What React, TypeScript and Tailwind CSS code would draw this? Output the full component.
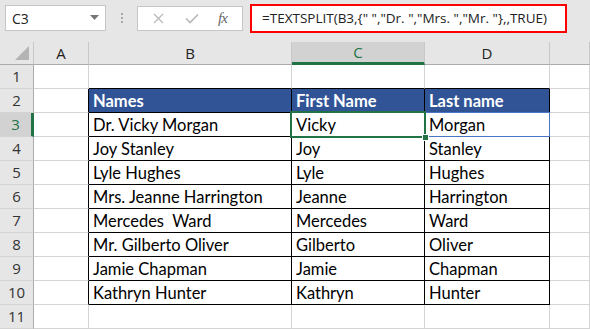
import React from "react";

const cols = ["A", "B", "C", "D", ""];
const data: string[][] = [
  ["Names", "First Name", "Last name"],
  ["Dr. Vicky Morgan", "Vicky", "Morgan"],
  ["Joy Stanley", "Joy", "Stanley"],
  ["Lyle Hughes", "Lyle", "Hughes"],
  ["Mrs. Jeanne Harrington", "Jeanne", "Harrington"],
  ["Mercedes  Ward", "Mercedes", "Ward"],
  ["Mr. Gilberto Oliver", "Gilberto", "Oliver"],
  ["Jamie Chapman", "Jamie", "Chapman"],
  ["Kathryn Hunter", "Kathryn", "Hunter"],
];

function Cell({ row, col }: { row: number; col: number }) {
  const inTable = row >= 2 && row <= 10 && col >= 1 && col <= 3;
  const rightBlack = inTable || (col === 0 && row >= 2 && row <= 10);
  const bottomBlack = inTable || (row === 1 && col >= 1 && col <= 3);
  const isHeader = row === 2 && inTable;
  const text = inTable ? data[row - 2][col - 1] : "";
  const isC3 = row === 3 && col === 2;
  const isD3 = row === 3 && col === 3;
  return (
    <div
      className={
        "relative flex items-end pl-[4px] pb-[1px] whitespace-pre border-r border-b font-['Lato',sans-serif] text-[16.5px] leading-[20px] " +
        (rightBlack ? "border-r-black " : "border-r-[#d4d4d4] ") +
        (bottomBlack ? "border-b-black " : "border-b-[#d4d4d4] ") +
        (isHeader ? "bg-[#305496] text-white font-bold " : "bg-white text-black ")
      }
    >
      {text}
      {isD3 && (
        <div className="absolute left-[-1px] top-[-1px] right-[-1px] bottom-[-1px] border border-[#4a74c4] shadow-[2px_2px_4px_rgba(0,0,0,0.12)]" />
      )}
      {isC3 && (
        <>
          <div className="absolute left-[-2px] top-[-2px] right-[-2px] bottom-[-2px] border-2 border-[#217346] z-10" />
          <div className="absolute right-[-5px] bottom-[-5px] w-[7px] h-[7px] bg-[#217346] border border-white z-20" />
        </>
      )}
    </div>
  );
}

export default function App() {
  const rows = Array.from({ length: 11 }, (_, i) => i + 1);
  return (
    <div className="w-[590px] h-[329px] overflow-hidden bg-[#e6e6e6] font-['Open_Sans',sans-serif]">
      {/* Formula bar */}
      <div className="h-[42px] flex items-start">
        <div className="ml-[5px] mt-[5px] w-[101px] h-[26px] bg-white border border-[#c6c6c6] flex items-center justify-between pl-[6px] pr-[6px]">
          <span className="text-[14px] text-[#222] font-['Open_Sans',sans-serif]">C3</span>
          <svg width="9" height="6" viewBox="0 0 9 6">
            <path d="M0 0 L9 0 L4.5 5 Z" fill="#777" />
          </svg>
        </div>
        <div className="ml-[15px] mt-[13px] flex flex-col gap-[2px]">
          <div className="w-[2px] h-[2px] bg-[#a8a8a8]" />
          <div className="w-[2px] h-[2px] bg-[#a8a8a8]" />
          <div className="w-[2px] h-[2px] bg-[#a8a8a8]" />
        </div>
        <div className="ml-[14px] mt-[6px] w-[106px] h-[25px] bg-white border border-[#c6c6c6] flex items-center">
          <svg className="ml-[15px]" width="11" height="11" viewBox="0 0 11 11">
            <path d="M1 1 L10 10 M10 1 L1 10" stroke="#b8b8b8" strokeWidth="1.3" />
          </svg>
          <svg className="ml-[21px]" width="14" height="11" viewBox="0 0 14 11">
            <path d="M1 5.5 L5 9.5 L13 1.5" stroke="#b8b8b8" strokeWidth="1.6" fill="none" />
          </svg>
          <span className="ml-[19px] font-['Liberation_Serif',serif] italic text-[15px] text-[#666] tracking-[-1px]">fx</span>
        </div>
        <div className="ml-[7px] mt-[4px] w-[317px] h-[29px] bg-white border-2 border-[#ff0000] flex items-center pl-[10px]">
          <span className="text-[13.5px] text-[#222] whitespace-pre font-['Open_Sans',sans-serif]">
            {'=TEXTSPLIT(B3,{" ","Dr. ","Mrs. ","Mr. "},,TRUE)'}
          </span>
        </div>
      </div>

      {/* Grid */}
      <div className="grid grid-cols-[34px_55px_203px_133px_125px_40px] grid-rows-[23px_repeat(11,24px)]">
        <div className="relative bg-[#e6e6e6] border-r border-b border-r-[#c8c8c8] border-b-[#ababab]">
          <svg className="absolute right-[4px] bottom-[4px]" width="14" height="14" viewBox="0 0 14 14">
            <path d="M14 0 L14 14 L0 14 Z" fill="#b4b4b4" />
          </svg>
        </div>
        {cols.map((c, i) => (
          <div
            key={c + i}
            className={
              "flex items-center justify-center text-[15px] border-b border-r border-r-[#c8c8c8] " +
              (i === 2
                ? "bg-[#d2d2d2] text-[#217346] border-b-[3px] border-b-[#217346]"
                : "bg-[#e6e6e6] text-[#222] border-b-[#ababab]")
            }
          >
            {c}
          </div>
        ))}
        {rows.map((r) => (
          <React.Fragment key={r}>
            <div
              className={
                "flex items-center justify-center text-[15px] border-b border-b-[#d4d4d4] border-r " +
                (r === 3
                  ? "bg-[#d2d2d2] text-[#217346] border-r-[3px] border-r-[#217346]"
                  : "bg-[#e6e6e6] text-[#333] border-r-[#ababab]")
              }
            >
              {r}
            </div>
            {[0, 1, 2, 3, 4].map((c) => (
              <Cell key={c} row={r} col={c} />
            ))}
          </React.Fragment>
        ))}
      </div>
    </div>
  );
}
